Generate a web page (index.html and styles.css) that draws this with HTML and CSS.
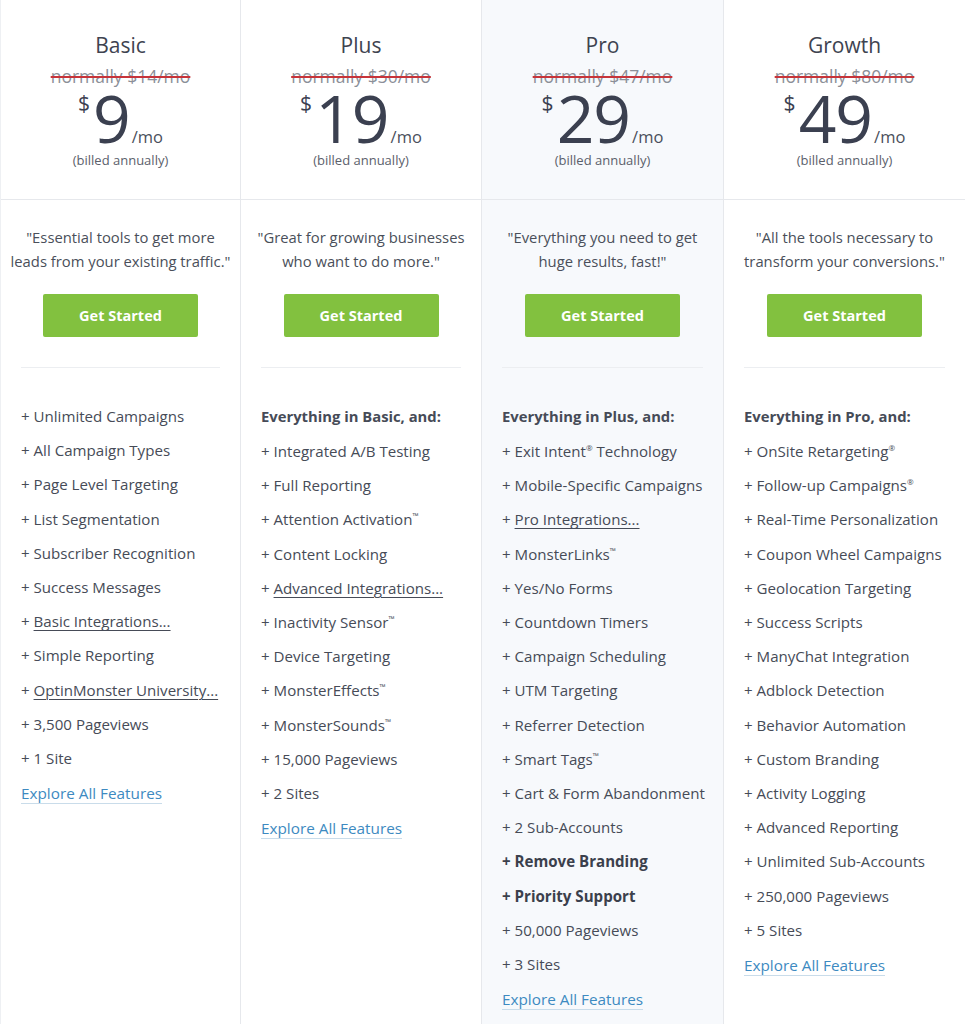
FILE: index.html
```html
<!DOCTYPE html>
<html lang="en">
<head>
<meta charset="utf-8">
<title>Pricing</title>
<link rel="stylesheet" href="styles.css">
</head>
<body>
<div class="plans">
  <section class="plan">
    <header class="plan-head">
      <h2 class="plan-name">Basic</h2>
      <div class="was">normally $14/mo</div>
      <div class="price"><span class="cur">$</span><span class="amt">9</span><span class="per">/mo</span></div>
      <div class="billed">(billed annually)</div>
    </header>
    <div class="plan-body">
      <p class="quote">"Essential tools to get more<br>leads from your existing traffic."</p>
      <a class="btn" href="#">Get Started</a>
      <hr class="sep">
      <ul class="features">
        <li>+ Unlimited Campaigns</li>
        <li>+ All Campaign Types</li>
        <li>+ Page Level Targeting</li>
        <li>+ List Segmentation</li>
        <li>+ Subscriber Recognition</li>
        <li>+ Success Messages</li>
        <li>+ <u>Basic Integrations...</u></li>
        <li>+ Simple Reporting</li>
        <li>+ <u>OptinMonster University...</u></li>
        <li>+ 3,500 Pageviews</li>
        <li>+ 1 Site</li>
      </ul>
      <a class="explore" href="#">Explore All Features</a>
    </div>
  </section>
  <section class="plan">
    <header class="plan-head">
      <h2 class="plan-name">Plus</h2>
      <div class="was">normally $30/mo</div>
      <div class="price"><span class="cur">$</span><span class="amt">19</span><span class="per">/mo</span></div>
      <div class="billed">(billed annually)</div>
    </header>
    <div class="plan-body">
      <p class="quote">"Great for growing businesses<br>who want to do more."</p>
      <a class="btn" href="#">Get Started</a>
      <hr class="sep">
      <div class="lead">Everything in Basic, and:</div>
      <ul class="features">
        <li>+ Integrated A/B Testing</li>
        <li>+ Full Reporting</li>
        <li>+ Attention Activation<sup>™</sup></li>
        <li>+ Content Locking</li>
        <li>+ <u>Advanced Integrations...</u></li>
        <li>+ Inactivity Sensor<sup>™</sup></li>
        <li>+ Device Targeting</li>
        <li>+ MonsterEffects<sup>™</sup></li>
        <li>+ MonsterSounds<sup>™</sup></li>
        <li>+ 15,000 Pageviews</li>
        <li>+ 2 Sites</li>
      </ul>
      <a class="explore" href="#">Explore All Features</a>
    </div>
  </section>
  <section class="plan plan-featured">
    <header class="plan-head">
      <h2 class="plan-name">Pro</h2>
      <div class="was">normally $47/mo</div>
      <div class="price"><span class="cur">$</span><span class="amt">29</span><span class="per">/mo</span></div>
      <div class="billed">(billed annually)</div>
    </header>
    <div class="plan-body">
      <p class="quote">"Everything you need to get<br>huge results, fast!"</p>
      <a class="btn" href="#">Get Started</a>
      <hr class="sep">
      <div class="lead">Everything in Plus, and:</div>
      <ul class="features">
        <li>+ Exit Intent<sup>®</sup> Technology</li>
        <li>+ Mobile-Specific Campaigns</li>
        <li>+ <u>Pro Integrations...</u></li>
        <li>+ MonsterLinks<sup>™</sup></li>
        <li>+ Yes/No Forms</li>
        <li>+ Countdown Timers</li>
        <li>+ Campaign Scheduling</li>
        <li>+ UTM Targeting</li>
        <li>+ Referrer Detection</li>
        <li>+ Smart Tags<sup>™</sup></li>
        <li>+ Cart &amp; Form Abandonment</li>
        <li>+ 2 Sub-Accounts</li>
        <li class="strong">+ Remove Branding</li>
        <li class="strong">+ Priority Support</li>
        <li>+ 50,000 Pageviews</li>
        <li>+ 3 Sites</li>
      </ul>
      <a class="explore" href="#">Explore All Features</a>
    </div>
  </section>
  <section class="plan">
    <header class="plan-head">
      <h2 class="plan-name">Growth</h2>
      <div class="was">normally $80/mo</div>
      <div class="price"><span class="cur">$</span><span class="amt">49</span><span class="per">/mo</span></div>
      <div class="billed">(billed annually)</div>
    </header>
    <div class="plan-body">
      <p class="quote">"All the tools necessary to<br>transform your conversions."</p>
      <a class="btn" href="#">Get Started</a>
      <hr class="sep">
      <div class="lead">Everything in Pro, and:</div>
      <ul class="features">
        <li>+ OnSite Retargeting<sup>®</sup></li>
        <li>+ Follow-up Campaigns<sup>®</sup></li>
        <li>+ Real-Time Personalization</li>
        <li>+ Coupon Wheel Campaigns</li>
        <li>+ Geolocation Targeting</li>
        <li>+ Success Scripts</li>
        <li>+ ManyChat Integration</li>
        <li>+ Adblock Detection</li>
        <li>+ Behavior Automation</li>
        <li>+ Custom Branding</li>
        <li>+ Activity Logging</li>
        <li>+ Advanced Reporting</li>
        <li>+ Unlimited Sub-Accounts</li>
        <li>+ 250,000 Pageviews</li>
        <li>+ 5 Sites</li>
      </ul>
      <a class="explore" href="#">Explore All Features</a>
    </div>
  </section>
</div>
</body>
</html>
```
FILE: styles.css
```css
* { box-sizing: border-box; }
html, body { margin: 0; padding: 0; background: #fff; }
body {
  font-family: "Open Sans", Lato, Arial, sans-serif;
  color: #464b57;
  width: 965px;
  height: 1024px;
  overflow: hidden;
}
.plans {
  display: grid;
  grid-template-columns: 241px 241px 242px 241px;
  min-height: 1024px;
}
.plan {
  border-right: 1px solid #e6e8ec;
  display: flex;
  flex-direction: column;
}
.plan:first-child { border-left: 1px solid #eef0f3; }
.plan:last-child { border-right: none; }
.plan-featured { background: #f7f9fc; }
.plan-head {
  height: 200px;
  border-bottom: 1px solid #e6e8ec;
  padding-top: 33px;
  display: flex;
  flex-direction: column;
  align-items: center;
}
.plan-name {
  margin: 0;
  font-size: 21px;
  font-weight: 400;
  line-height: 24px;
  color: #3e4350;
}
.was {
  margin-top: 8px;
  font-size: 17.5px;
  line-height: 22px;
  color: #8b8f98;
  text-decoration: line-through;
  text-decoration-color: #c7343a;
  text-decoration-thickness: 2px;
}
.price {
  display: flex;
  align-items: baseline;
  height: 56px;
  margin-top: 2px;
  color: #3b4050;
}
.cur {
  align-self: flex-start;
  font-size: 21px;
  line-height: 22px;
  margin-top: 3px;
  margin-right: 3px;
}
.amt {
  font-size: 66px;
  font-weight: 400;
  line-height: 56px;
  letter-spacing: -1px;
}
.per {
  font-size: 16.5px;
  line-height: 16px;
  margin-left: 2px;
  color: #4a4f5b;
}
.billed {
  margin-top: 6px;
  font-size: 13px;
  line-height: 18px;
  color: #5b606b;
}
.plan-body {
  padding: 0 20px;
  display: flex;
  flex-direction: column;
}
.quote {
  margin: 25px -20px 0;
  font-size: 14.8px;
  line-height: 24px;
  text-align: center;
  white-space: nowrap;
  color: #4a4f5a;
}
.btn {
  align-self: center;
  margin-top: 21px;
  width: 155px;
  height: 43px;
  line-height: 43px;
  border-radius: 2px;
  background: #82c13f;
  color: #fff;
  font-weight: 700;
  font-size: 14.5px;
  text-align: center;
  text-decoration: none;
}
.sep {
  margin: 30px 0 0;
  border: 0;
  border-top: 1px solid #eceef1;
  height: 0;
}
.lead {
  margin-top: 38px;
  font-size: 14.8px;
  font-weight: 700;
  line-height: 20px;
  color: #464b57;
}
.features {
  list-style: none;
  margin: 31px 0 0;
  padding: 0;
  font-size: 15.1px;
  line-height: 34.2px;
}
.lead + .features { margin-top: 0; padding-top: 8px; }
.features li { white-space: nowrap; }
.features u { text-decoration-thickness: 1px; text-underline-offset: 3px; }
.features sup { font-size: 8px; vertical-align: 6px; line-height: 0; }
.features .strong { font-weight: 700; color: #3b404c; }
.explore {
  align-self: flex-start;
  font-size: 15.3px;
  color: #3d8ac1;
  text-decoration: none;
  border-bottom: 1px solid #c9dcea;
  line-height: 20px;
  margin-top: 8px;
}
```
